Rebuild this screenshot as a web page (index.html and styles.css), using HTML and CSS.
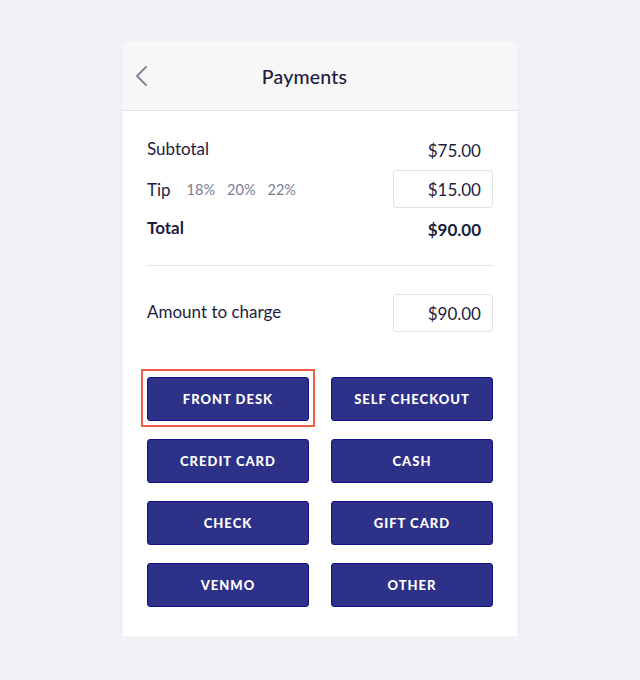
FILE: index.html
```html
<!DOCTYPE html>
<html lang="en">
<head>
  <meta charset="UTF-8">
  <meta name="viewport" content="width=device-width, initial-scale=1.0">
  <title>Payments</title>
  <link rel="stylesheet" href="styles.css">
</head>
<body>
  <div class="card">
    <header class="top-bar">
      <button class="back" aria-label="Back">
        <svg width="14" height="22" viewBox="0 0 14 22"><path d="M12 2 L3 11 L12 20" fill="none" stroke="#7d8193" stroke-width="1.8" stroke-linecap="round" stroke-linejoin="round"/></svg>
      </button>
      <h1>Payments</h1>
    </header>

    <section class="summary">
      <div class="row">
        <span class="label">Subtotal</span>
        <span class="value">$75.00</span>
      </div>
      <div class="row tip">
        <span class="label">Tip
          <span class="tip-options">
            <span>18%</span><span>20%</span><span>22%</span>
          </span>
        </span>
        <input class="amount" type="text" value="$15.00">
      </div>
      <div class="row total">
        <span class="label">Total</span>
        <span class="value">$90.00</span>
      </div>
    </section>

    <section class="charge">
      <div class="row">
        <span class="label">Amount to charge</span>
        <input class="amount" type="text" value="$90.00">
      </div>
    </section>

    <section class="methods">
      <button class="method selected">Front Desk</button>
      <button class="method">Self Checkout</button>
      <button class="method">Credit Card</button>
      <button class="method">Cash</button>
      <button class="method">Check</button>
      <button class="method">Gift Card</button>
      <button class="method">Venmo</button>
      <button class="method">Other</button>
    </section>
  </div>
</body>
</html>
```

FILE: styles.css
```css
body {
  margin: 0;
  background: #f0f1f5;
  font-family: Lato, "Liberation Sans", sans-serif;
  color: #1c1d3e;
}
.card {
  width: 394px;
  margin: 42px auto 0;
  background: #fff;
}
.top-bar {
  height: 68px;
  display: flex;
  align-items: center;
  background: #f7f7f7;
  border-bottom: 1px solid #e4e4e6;
}
.back {
  width: 36px;
  height: 36px;
  margin-left: 11px;
  padding: 0;
  border: none;
  background: none;
  display: flex;
  align-items: center;
  justify-content: flex-start;
}
.top-bar h1 {
  flex: 1;
  margin: 0;
  padding-right: 78px;
  text-align: center;
  font-size: 19.5px;
  font-weight: 500;
  letter-spacing: 0.2px;
}
.summary {
  padding: 20px 24px 17px;
  display: flex;
  flex-direction: column;
  gap: 1px;
}
.row {
  height: 38px;
  display: flex;
  align-items: center;
  justify-content: space-between;
  font-size: 17px;
}
.label {
  display: flex;
  align-items: center;
  padding-bottom: 3px;
}
.tip .label {
  padding-bottom: 0;
}
.value {
  padding-right: 12px;
}
.tip-options {
  display: flex;
  gap: 12px;
  margin-left: 16px;
  font-size: 14.5px;
  color: #7a7c91;
}
.total {
  margin-top: 1px;
  font-weight: 700;
}
.amount {
  width: 100px;
  height: 38px;
  box-sizing: border-box;
  padding: 0 11px;
  border: 1px solid #e2e2e5;
  border-radius: 3px;
  text-align: right;
  font: inherit;
  color: inherit;
}
.charge {
  margin: 0 24px;
  padding-top: 28px;
  border-top: 1px solid #e2e2e5;
}
.methods {
  display: grid;
  grid-template-columns: 162px 162px;
  gap: 18px 22px;
  padding: 45px 24px 29px;
}
.method {
  position: relative;
  height: 44px;
  border: 1px solid #13138a;
  border-radius: 3px;
  background: #2e3188;
  color: #fff;
  font-family: inherit;
  font-size: 13px;
  font-weight: 900;
  letter-spacing: 1px;
  text-transform: uppercase;
  cursor: pointer;
}
.method.selected::after {
  content: "";
  position: absolute;
  top: -9px;
  left: -7px;
  right: -7px;
  bottom: -7px;
  border: 2px solid #ef5b4b;
}
```
